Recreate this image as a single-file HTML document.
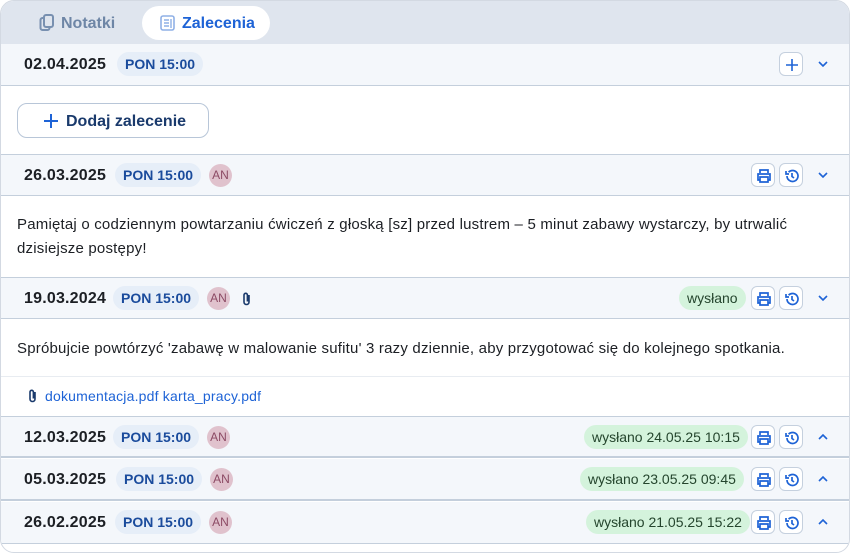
<!DOCTYPE html>
<html><head><meta charset="utf-8"><style>
*{box-sizing:border-box;margin:0;padding:0}
body{width:850px;height:553px;background:#fff;font-family:"Liberation Sans",sans-serif;position:relative;overflow:hidden;color:#1c1f24}
.wrap{position:absolute;left:0;top:0;width:850px;height:553px;border:1px solid #d3d9e2;border-radius:14px;overflow:hidden;background:#fff}
.tabs{position:absolute;left:0;top:0;width:850px;height:44px;background:#dfe5ee;border-bottom:1px solid #c9d2de}
.tab{position:absolute;top:5px;height:34px;border-radius:17px;font-size:16px;font-weight:bold;line-height:34px}
.row{position:absolute;left:0;width:850px;height:42px;background:#f4f7fb;border-bottom:1px solid #c4cfdc;border-top:1px solid #c4cfdc}
.date{position:absolute;left:23px;top:12px;font-size:16px;font-weight:bold;color:#1c1f24;letter-spacing:0.2px}
.pon{position:absolute;top:8px;height:24px;padding:0 8px;border-radius:12px;background:#e6eef8;color:#1a4b9c;font-size:14px;font-weight:bold;line-height:24px}
.an{position:absolute;top:9px;width:23px;height:23px;border-radius:50%;background:#e0c2cd;color:#8c4a64;font-size:12px;line-height:23px;text-align:center}
.ib{position:absolute;top:8px;width:24px;height:24px;border:1px solid #c5d0de;border-radius:6px;background:#fff}
.ib svg{position:absolute;left:4px;top:4px}
.chev{position:absolute;left:815px;top:15px}
.sent{position:absolute;top:8px;height:24px;padding:0 8px;border-radius:12px;background:#d4f3dc;color:#24452d;font-size:14px;line-height:24px}
.txt{position:absolute;left:16px;font-size:15px;color:#1c1f24;letter-spacing:0.2px}
</style></head><body>
<div class="wrap">
<div class="tabs">
 <div class="tab" style="left:24px;width:110px;color:#6e86a6">
  <svg style="position:absolute;left:14px;top:8px" width="16" height="18" viewBox="0 0 16 18"><rect x="1.5" y="4" width="9" height="12" rx="2" fill="none" stroke="#7890b0" stroke-width="2"/><rect x="5" y="1" width="9" height="12" rx="2" fill="#dfe5ee" stroke="#7890b0" stroke-width="2"/></svg>
  <span style="position:absolute;left:36px;top:1px">Notatki</span></div>
 <div class="tab" style="left:141px;width:128px;background:#fff;color:#1e63d6">
  <svg style="position:absolute;left:18px;top:9px" width="15" height="16" viewBox="0 0 15 16"><rect x="1" y="1" width="13" height="14" rx="2" fill="none" stroke="#8fb0e6" stroke-width="1.6"/><path d="M4 5h5M4 8h5M4 11h5M11 4v9" stroke="#8fb0e6" stroke-width="1.4"/></svg>
  <span style="position:absolute;left:40px;top:1px">Zalecenia</span></div>
</div>

<div class="row" style="top:43px;border-top:none">
 <div class="date">02.04.2025</div><div class="pon" style="left:116px">PON 15:00</div>
 <div class="ib" style="left:778px"><svg width="16" height="16"><path d="M8 2v12M2 8h12" stroke="#1e63d6" stroke-width="1.6"/></svg></div>
 <svg class="chev" width="14" height="10"><path d="M3 3l4 4 4-4" fill="none" stroke="#1e63d6" stroke-width="1.6"/></svg>
</div>
<div style="position:absolute;left:16px;top:102px;width:192px;height:35px;border:1px solid #b8c6d8;border-radius:10px;color:#1a3a6c;font-size:16px;font-weight:bold;line-height:33px">
 <svg style="position:absolute;left:25px;top:9px" width="16" height="16"><path d="M8 1v14M1 8h14" stroke="#1e63d6" stroke-width="2"/></svg>
 <span style="position:absolute;left:48px;top:1px">Dodaj zalecenie</span></div>

<div class="row" style="top:153px">
 <div class="date">26.03.2025</div><div class="pon" style="left:114px">PON 15:00</div><div class="an" style="left:208px">AN</div>
 <div class="ib" style="left:750px"><svg width="16" height="16"><path d="M4 5V2h8v3M4 12H2V6h12v6h-2M4 9h8v5H4z" fill="none" stroke="#1e63d6" stroke-width="1.7"/></svg></div>
 <div class="ib" style="left:778px"><svg width="16" height="16"><path d="M3 8a5.5 5.5 0 1 0 1.6-3.9M2 3v3h3M8 5v3.5l2 1.5" fill="none" stroke="#1e63d6" stroke-width="1.7"/></svg></div>
 <svg class="chev" width="14" height="10"><path d="M3 3l4 4 4-4" fill="none" stroke="#1e63d6" stroke-width="1.6"/></svg>
</div>
<div class="txt" style="top:215px">Pamiętaj o codziennym powtarzaniu ćwiczeń z głoską [sz] przed lustrem – 5 minut zabawy wystarczy, by utrwalić</div>
<div class="txt" style="top:239px">dzisiejsze postępy!</div>

<div class="row" style="top:276px">
 <div class="date">19.03.2024</div><div class="pon" style="left:112px">PON 15:00</div><div class="an" style="left:206px">AN</div>
 <svg style="position:absolute;left:240px;top:13px" width="12" height="16" viewBox="0 0 12 16"><path d="M8 4v7a2.5 2.5 0 0 1-5 0V4a1.7 1.7 0 0 1 3.4 0v6.5" fill="none" stroke="#1a3a6c" stroke-width="1.6"/></svg>
 <div class="sent" style="left:678px">wysłano</div>
 <div class="ib" style="left:750px"><svg width="16" height="16"><path d="M4 5V2h8v3M4 12H2V6h12v6h-2M4 9h8v5H4z" fill="none" stroke="#1e63d6" stroke-width="1.7"/></svg></div>
 <div class="ib" style="left:778px"><svg width="16" height="16"><path d="M3 8a5.5 5.5 0 1 0 1.6-3.9M2 3v3h3M8 5v3.5l2 1.5" fill="none" stroke="#1e63d6" stroke-width="1.7"/></svg></div>
 <svg class="chev" width="14" height="10"><path d="M3 3l4 4 4-4" fill="none" stroke="#1e63d6" stroke-width="1.6"/></svg>
</div>
<div class="txt" style="top:339px">Spróbujcie powtórzyć 'zabawę w malowanie sufitu' 3 razy dziennie, aby przygotować się do kolejnego spotkania.</div>
<div style="position:absolute;left:0;top:375px;width:850px;border-top:1px solid #e8ecf1"></div>
<svg style="position:absolute;left:26px;top:387px" width="12" height="16" viewBox="0 0 12 16"><path d="M8 4v7a2.5 2.5 0 0 1-5 0V4a1.7 1.7 0 0 1 3.4 0v6.5" fill="none" stroke="#1a3a6c" stroke-width="1.6"/></svg>
<div style="position:absolute;left:44px;top:387px;font-size:14px;color:#1e63d6;letter-spacing:0.2px">dokumentacja.pdf karta_pracy.pdf</div>

<div class="row" style="top:415px;border-bottom:2px solid #c4cfdc">
 <div class="date">12.03.2025</div><div class="pon" style="left:112px">PON 15:00</div><div class="an" style="left:206px">AN</div>
 <div class="sent" style="left:583px">wysłano 24.05.25 10:15</div>
 <div class="ib" style="left:750px"><svg width="16" height="16"><path d="M4 5V2h8v3M4 12H2V6h12v6h-2M4 9h8v5H4z" fill="none" stroke="#1e63d6" stroke-width="1.7"/></svg></div>
 <div class="ib" style="left:778px"><svg width="16" height="16"><path d="M3 8a5.5 5.5 0 1 0 1.6-3.9M2 3v3h3M8 5v3.5l2 1.5" fill="none" stroke="#1e63d6" stroke-width="1.7"/></svg></div>
 <svg class="chev" width="14" height="10"><path d="M3 7l4-4 4 4" fill="none" stroke="#1e63d6" stroke-width="1.6"/></svg>
</div>
<div class="row" style="top:458px;border-top:none;border-bottom:2px solid #c4cfdc">
 <div class="date">05.03.2025</div><div class="pon" style="left:115px">PON 15:00</div><div class="an" style="left:209px">AN</div>
 <div class="sent" style="left:579px">wysłano 23.05.25 09:45</div>
 <div class="ib" style="left:750px"><svg width="16" height="16"><path d="M4 5V2h8v3M4 12H2V6h12v6h-2M4 9h8v5H4z" fill="none" stroke="#1e63d6" stroke-width="1.7"/></svg></div>
 <div class="ib" style="left:778px"><svg width="16" height="16"><path d="M3 8a5.5 5.5 0 1 0 1.6-3.9M2 3v3h3M8 5v3.5l2 1.5" fill="none" stroke="#1e63d6" stroke-width="1.7"/></svg></div>
 <svg class="chev" width="14" height="10"><path d="M3 7l4-4 4 4" fill="none" stroke="#1e63d6" stroke-width="1.6"/></svg>
</div>
<div class="row" style="top:501px;border-top:none">
 <div class="date">26.02.2025</div><div class="pon" style="left:114px">PON 15:00</div><div class="an" style="left:208px">AN</div>
 <div class="sent" style="left:585px">wysłano 21.05.25 15:22</div>
 <div class="ib" style="left:750px"><svg width="16" height="16"><path d="M4 5V2h8v3M4 12H2V6h12v6h-2M4 9h8v5H4z" fill="none" stroke="#1e63d6" stroke-width="1.7"/></svg></div>
 <div class="ib" style="left:778px"><svg width="16" height="16"><path d="M3 8a5.5 5.5 0 1 0 1.6-3.9M2 3v3h3M8 5v3.5l2 1.5" fill="none" stroke="#1e63d6" stroke-width="1.7"/></svg></div>
 <svg class="chev" width="14" height="10"><path d="M3 7l4-4 4 4" fill="none" stroke="#1e63d6" stroke-width="1.6"/></svg>
</div>
</div>
</body></html>
